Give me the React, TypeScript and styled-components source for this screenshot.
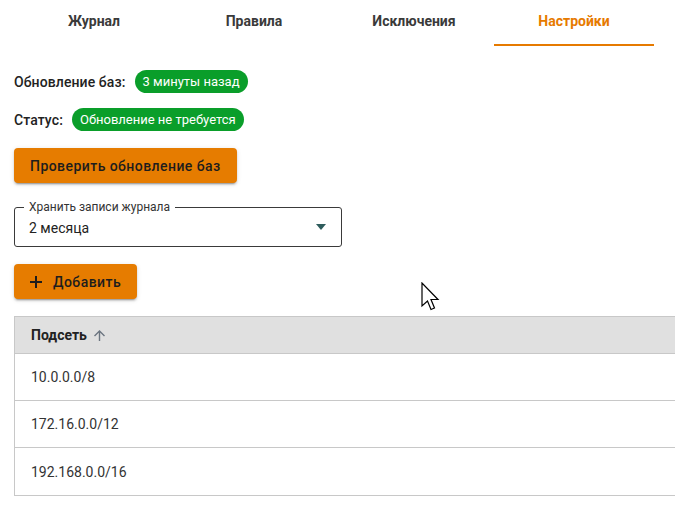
import React from "react";
import styled, { createGlobalStyle } from "styled-components";

const Global = createGlobalStyle`
  html, body { margin: 0; padding: 0; background: #fff; overflow: hidden; }
  body { font-family: Roboto, "Liberation Sans", sans-serif; color: #2b2b2b; }
  * { box-sizing: border-box; }
`;

const Page = styled.div`
  position: relative;
  width: 675px;
  height: 506px;
  overflow: hidden;
`;

const TabBar = styled.div`
  display: flex;
  margin-left: 14px;
  height: 46px;
`;

const Tab = styled.div<{ $active?: boolean }>`
  width: 160px;
  display: flex;
  align-items: center;
  justify-content: center;
  padding-bottom: 2px;
  font-size: 14px;
  font-weight: 700;
  color: ${(p) => (p.$active ? "#e67a00" : "#3a3a3a")};
  border-bottom: 2px solid ${(p) => (p.$active ? "#e67a00" : "transparent")};
`;

const Content = styled.div`
  padding: 24px 0 0 14px;
  display: flex;
  flex-direction: column;
  align-items: flex-start;
`;

const InfoRow = styled.div<{ $mb: number }>`
  display: flex;
  align-items: center;
  gap: 9px;
  height: 23px;
  margin-bottom: ${(p) => p.$mb}px;
`;

const Label = styled.span`
  font-size: 14px;
  font-weight: 500;
  letter-spacing: 0.1px;
  color: #222;
`;

const Chip = styled.span`
  display: inline-flex;
  align-items: center;
  height: 23px;
  padding: 0 8px;
  border-radius: 12px;
  background: #0a9e2a;
  color: #fff;
  font-size: 13px;
`;

const Button = styled.button<{ $mb: number }>`
  display: inline-flex;
  align-items: center;
  gap: 11px;
  height: 35px;
  padding: 0 16px;
  border: none;
  border-radius: 4px;
  background: #e67c00;
  color: #1d1d1d;
  font-family: Roboto, "Liberation Sans", sans-serif;
  font-size: 14px;
  font-weight: 500;
  letter-spacing: 0.45px;
  box-shadow: 0 3px 1px -2px rgba(0,0,0,0.2), 0 2px 2px 0 rgba(0,0,0,0.14), 0 1px 5px 0 rgba(0,0,0,0.12);
  margin-bottom: ${(p) => p.$mb}px;
`;

const SelectBox = styled.div`
  position: relative;
  width: 328px;
  height: 40px;
  margin: 0 0 17px 0;
  padding: 0 14px;
  border: 1px solid #3a3a3a;
  border-radius: 3px;
  display: flex;
  align-items: center;
  justify-content: space-between;
`;

const FloatLabel = styled.span`
  position: absolute;
  top: -8px;
  left: 9px;
  padding: 0 5px;
  background: #fff;
  font-size: 12px;
  color: #333;
  line-height: 14px;
`;

const SelectValue = styled.span`
  font-size: 14px;
  color: #222;
  padding-top: 1px;
`;

const Table = styled.div`
  width: 700px;
  border: 1px solid #c8c8c8;
  border-right: none;
`;

const HeaderRow = styled.div`
  height: 37px;
  display: flex;
  align-items: center;
  gap: 6px;
  padding-left: 16px;
  background: #e0e0e0;
  border-bottom: 1px solid #c8c8c8;
  font-size: 14px;
  font-weight: 700;
  color: #222;
`;

const Row = styled.div<{ $last?: boolean }>`
  height: 47px;
  display: flex;
  align-items: center;
  padding-left: 16px;
  font-size: 14px;
  color: #333;
  border-bottom: ${(p) => (p.$last ? "none" : "1px solid #c8c8c8")};
`;

const Cursor = styled.svg`
  position: absolute;
  left: 421px;
  top: 282px;
`;

export default function App() {
  return (
    <Page>
      <Global />
      <TabBar>
        <Tab>Журнал</Tab>
        <Tab>Правила</Tab>
        <Tab>Исключения</Tab>
        <Tab $active>Настройки</Tab>
      </TabBar>
      <Content>
        <InfoRow $mb={15}>
          <Label>Обновление баз:</Label>
          <Chip>3 минуты назад</Chip>
        </InfoRow>
        <InfoRow $mb={17}>
          <Label>Статус:</Label>
          <Chip>Обновление не требуется</Chip>
        </InfoRow>
        <Button $mb={24}>Проверить обновление баз</Button>
        <SelectBox>
          <FloatLabel>Хранить записи журнала</FloatLabel>
          <SelectValue>2 месяца</SelectValue>
          <svg width="12" height="6" viewBox="0 0 12 6">
            <path d="M1 0 L11 0 L6 6 Z" fill="#2e5c5c" />
          </svg>
        </SelectBox>
        <Button $mb={17}>
          <svg width="12" height="12" viewBox="0 0 12 12">
            <path d="M6 0 V12 M0 6 H12" stroke="#1d1d1d" strokeWidth="2" />
          </svg>
          Добавить
        </Button>
        <Table>
          <HeaderRow>
            Подсеть
            <svg width="13" height="13" viewBox="0 0 13 13">
              <path d="M6.5 12 V2 M1.5 7 L6.5 2 L11.5 7" stroke="#6b7580" strokeWidth="1.4" fill="none" />
            </svg>
          </HeaderRow>
          <Row>10.0.0.0/8</Row>
          <Row>172.16.0.0/12</Row>
          <Row $last>192.168.0.0/16</Row>
        </Table>
      </Content>
      <Cursor width="20" height="30" viewBox="0 0 20 30">
        <path d="M1 1 L1 24 L6.5 19 L10 27.5 L13.5 26 L10 17.5 L17 17.5 Z" fill="#fff" stroke="#000" strokeWidth="1.2" strokeLinejoin="miter" />
      </Cursor>
    </Page>
  );
}
